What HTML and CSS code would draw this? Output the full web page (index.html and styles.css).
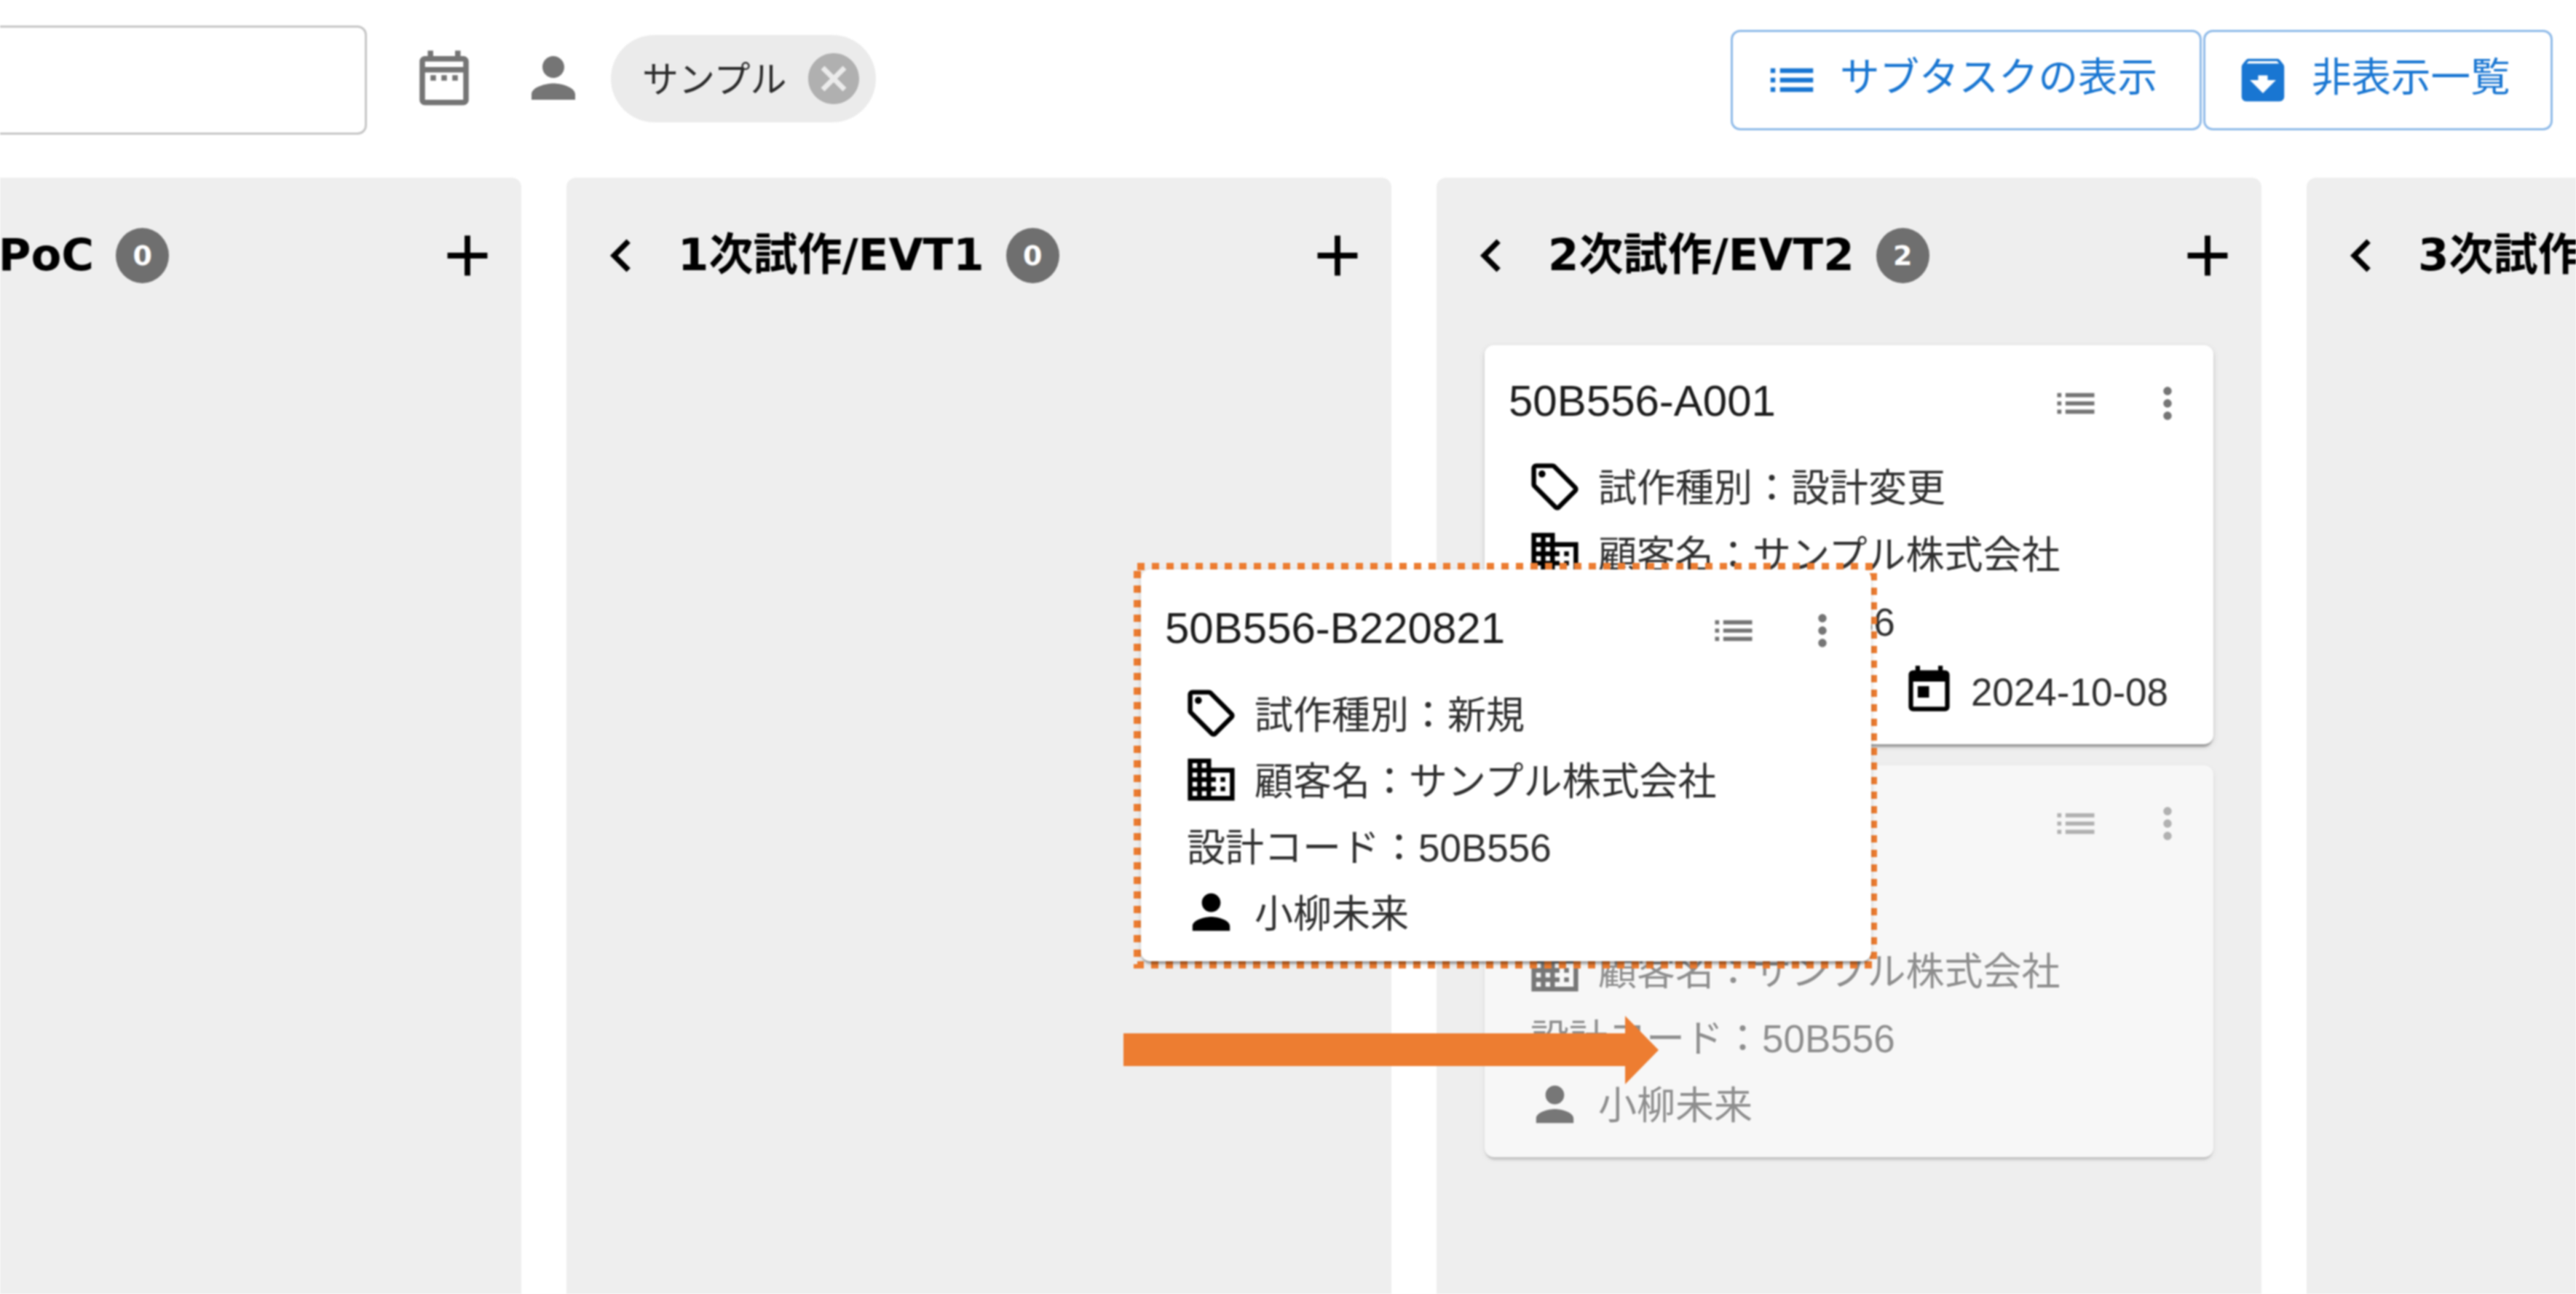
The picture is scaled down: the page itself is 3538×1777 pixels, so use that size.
FILE: index.html
```html
<!DOCTYPE html>
<html lang="ja">
<head>
<meta charset="utf-8">
<title>Board</title>
<link rel="stylesheet" href="styles.css">
</head>
<body>
<svg class="sprite" aria-hidden="true">
  <symbol id="i-range" viewBox="0 0 24 24"><path d="M7 11h2v2H7v-2zm14-5v14c0 1.1-.9 2-2 2H5c-1.11 0-2-.9-2-2l.01-14c0-1.1.88-2 1.99-2h1V2h2v2h8V2h2v2h1c1.1 0 2 .9 2 2zM5 8h14V6H5v2zm14 12V10H5v10h14zm-4-7h2v-2h-2v2zm-4 0h2v-2h-2v2z"/></symbol>
  <symbol id="i-person" viewBox="0 0 24 24"><path d="M12 12c2.21 0 4-1.79 4-4s-1.79-4-4-4-4 1.79-4 4 1.79 4 4 4zm0 2c-2.67 0-8 1.34-8 4v2h16v-2c0-2.66-5.33-4-8-4z"/></symbol>
  <symbol id="i-list" viewBox="0 0 24 24"><path d="M3 13h2v-2H3v2zm0 4h2v-2H3v2zm0-8h2V7H3v2zm4 4h14v-2H7v2zm0 4h14v-2H7v2zM7 7v2h14V7H7z"/></symbol>
  <symbol id="i-archive" viewBox="0 0 24 24"><path d="m20.54 5.23-1.39-1.68C18.88 3.21 18.47 3 18 3H6c-.47 0-.88.21-1.16.55L3.46 5.23C3.17 5.57 3 6.02 3 6.5V19c0 1.1.9 2 2 2h14c1.1 0 2-.9 2-2V6.5c0-.48-.17-.93-.46-1.27zM12 17.5 6.5 12H10v-2h4v2h3.5L12 17.5zM5.12 5l.81-1h12l.94 1H5.12z"/></symbol>
  <symbol id="i-cancel" viewBox="0 0 24 24"><path d="M12 2C6.47 2 2 6.47 2 12s4.47 10 10 10 10-4.47 10-10S17.53 2 12 2zm5 13.59L15.59 17 12 13.41 8.41 17 7 15.59 10.59 12 7 8.41 8.41 7 12 10.59 15.59 7 17 8.41 13.41 12 17 15.59z"/></symbol>
  <symbol id="i-before" viewBox="0 0 24 24"><path d="M15.41 7.41 14 6l-6 6 6 6 1.41-1.41L10.83 12z"/></symbol>
  <symbol id="i-add" viewBox="0 0 24 24"><path d="M19 13h-6v6h-2v-6H5v-2h6V5h2v6h6v2z"/></symbol>
  <symbol id="i-more" viewBox="0 0 24 24"><path d="M12 8c1.1 0 2-.9 2-2s-.9-2-2-2-2 .9-2 2 .9 2 2 2zm0 2c-1.1 0-2 .9-2 2s.9 2 2 2 2-.9 2-2-.9-2-2-2zm0 6c-1.1 0-2 .9-2 2s.9 2 2 2 2-.9 2-2-.9-2-2-2z"/></symbol>
  <symbol id="i-tag" viewBox="0 0 24 24"><path d="m21.41 11.58-9-9C12.05 2.22 11.55 2 11 2H4c-1.1 0-2 .9-2 2v7c0 .55.22 1.05.59 1.42l9 9c.36.36.86.58 1.41.58s1.05-.22 1.41-.59l7-7c.37-.36.59-.86.59-1.41s-.23-1.06-.59-1.42zM13 20.01 4 11V4h7v-.01l9 9-7 7.02z"/><circle cx="6.5" cy="6.5" r="1.5"/></symbol>
  <symbol id="i-business" viewBox="0 0 24 24"><path d="M12 7V3H2v18h20V7H12zM6 19H4v-2h2v2zm0-4H4v-2h2v2zm0-4H4V9h2v2zm0-4H4V5h2v2zm4 12H8v-2h2v2zm0-4H8v-2h2v2zm0-4H8V9h2v2zm0-4H8V5h2v2zm10 12h-8v-2h2v-2h-2v-2h2v-2h-2V9h8v10zm-2-8h-2v2h2v-2zm0 4h-2v2h2v-2z"/></symbol>
  <symbol id="i-today" viewBox="0 0 24 24"><path d="M19 3h-1V1h-2v2H8V1H6v2H5c-1.11 0-1.99.9-1.99 2L3 19c0 1.1.89 2 2 2h14c1.1 0 2-.9 2-2V5c0-1.1-.9-2-2-2zm0 16H5V8h14v11zM7 10h5v5H7z"/></symbol>
</svg>

<div class="page">
  <header class="toolbar">
    <div class="search"></div>
    <svg class="tool-icon tool-calendar"><use href="#i-range"/></svg>
    <svg class="tool-icon tool-person"><use href="#i-person"/></svg>
    <div class="chip">
      <span class="chip-label">サンプル</span>
      <svg class="chip-delete"><use href="#i-cancel"/></svg>
    </div>
    <div class="actions">
      <button class="action action-subtask" type="button"><svg class="action-icon"><use href="#i-list"/></svg><span>サブタスクの表示</span></button>
      <button class="action action-hidden" type="button"><svg class="action-icon"><use href="#i-archive"/></svg><span>非表示一覧</span></button>
    </div>
  </header>

  <main class="board">
    <section class="column">
      <div class="column-head">
        <svg class="chevron"><use href="#i-before"/></svg>
        <h2 class="column-title column-title-first">0次試作/PoC</h2>
        <span class="count">0</span>
        <svg class="add"><use href="#i-add"/></svg>
      </div>
    </section>

    <section class="column">
      <div class="column-head">
        <svg class="chevron"><use href="#i-before"/></svg>
        <h2 class="column-title">1次試作/EVT1</h2>
        <span class="count">0</span>
        <svg class="add"><use href="#i-add"/></svg>
      </div>
    </section>

    <section class="column">
      <div class="column-head">
        <svg class="chevron"><use href="#i-before"/></svg>
        <h2 class="column-title">2次試作/EVT2</h2>
        <span class="count">2</span>
        <svg class="add"><use href="#i-add"/></svg>
      </div>
      <div class="cards">
        <article class="card">
          <div class="card-head">
            <h3 class="card-title">50B556-A001</h3>
            <svg class="card-tool card-list"><use href="#i-list"/></svg>
            <svg class="card-tool card-more"><use href="#i-more"/></svg>
          </div>
          <div class="row"><svg class="row-icon"><use href="#i-tag"/></svg><span>試作種別：設計変更</span></div>
          <div class="row"><svg class="row-icon"><use href="#i-business"/></svg><span>顧客名：サンプル株式会社</span></div>
          <div class="row row-plain"><span>設計コード：50B556</span></div>
          <div class="row row-last">
            <svg class="row-icon row-icon-person"><use href="#i-person"/></svg><span>小柳未来</span>
            <div class="due"><svg class="due-icon"><use href="#i-today"/></svg><span>2024-10-08</span></div>
          </div>
        </article>
        <article class="card card-ghost">
          <div class="card-head">
            <h3 class="card-title">50B556-B220821</h3>
            <svg class="card-tool card-list"><use href="#i-list"/></svg>
            <svg class="card-tool card-more"><use href="#i-more"/></svg>
          </div>
          <div class="row"><svg class="row-icon"><use href="#i-tag"/></svg><span>試作種別：新規</span></div>
          <div class="row"><svg class="row-icon"><use href="#i-business"/></svg><span>顧客名：サンプル株式会社</span></div>
          <div class="row row-plain"><span>設計コード：50B556</span></div>
          <div class="row"><svg class="row-icon row-icon-person"><use href="#i-person"/></svg><span>小柳未来</span></div>
        </article>
      </div>
    </section>

    <section class="column">
      <div class="column-head">
        <svg class="chevron"><use href="#i-before"/></svg>
        <h2 class="column-title">3次試作/EVT3</h2>
        <span class="count">0</span>
        <svg class="add"><use href="#i-add"/></svg>
      </div>
    </section>
  </main>

  <div class="drag">
    <svg class="drag-outline" viewBox="0 0 1021 557"><rect x="5" y="5" width="1011" height="547"/></svg>
    <article class="card card-drag">
      <div class="card-head">
        <h3 class="card-title">50B556-B220821</h3>
        <svg class="card-tool card-list"><use href="#i-list"/></svg>
        <svg class="card-tool card-more"><use href="#i-more"/></svg>
      </div>
      <div class="row"><svg class="row-icon"><use href="#i-tag"/></svg><span>試作種別：新規</span></div>
      <div class="row"><svg class="row-icon"><use href="#i-business"/></svg><span>顧客名：サンプル株式会社</span></div>
      <div class="row row-plain"><span>設計コード：50B556</span></div>
      <div class="row"><svg class="row-icon row-icon-person"><use href="#i-person"/></svg><span>小柳未来</span></div>
    </article>
  </div>

  <svg class="arrow" viewBox="0 0 735 94"><polygon points="0,24 689,24 689,0 735,47 689,94 689,69 0,69"/></svg>
</div>
</body>
</html>
```

FILE: styles.css
```css
* { box-sizing: border-box; }

html, body {
  margin: 0;
  height: 100%;
  overflow: hidden;
  background: #fff;
}

body {
  font-family: "Liberation Sans", "Noto Sans CJK JP", sans-serif;
  font-size: 53px;
  color: #2f2f2f;
}

.sprite { display: none; }

.page {
  position: relative;
  width: 3538px;
  height: 1777px;
  overflow: hidden;
  filter: blur(.9px);
}

/* toolbar */
.toolbar {
  display: flex;
  align-items: center;
  height: 219px;
  padding-right: 32px;
}

.search {
  width: 524px;
  height: 150px;
  margin-left: -20px;
  border: 3px solid #c6c6c6;
  border-radius: 13px;
}

.tool-icon {
  flex: none;
  width: 90px;
  height: 90px;
  fill: #757575;
  margin-top: -5px;
}

.tool-calendar { margin-left: 61px; }
.tool-person { margin-left: 60px; }

.chip {
  display: flex;
  align-items: center;
  width: 364px;
  height: 120px;
  margin-left: 34px;
  margin-top: -3px;
  padding-left: 43px;
  border-radius: 60px;
  background: #ebebeb;
}

.chip-label {
  position: relative;
  top: -3px;
  font-size: 50px;
  color: #2b2b2b;
  white-space: nowrap;
}

.chip-delete {
  flex: none;
  width: 84px;
  height: 84px;
  margin-left: 22px;
  fill: #b0b0b0;
}

.actions {
  display: flex;
  gap: 2px;
  margin-left: auto;
}

.action {
  display: flex;
  align-items: center;
  height: 138px;
  padding: 0;
  border: 3px solid #90bbe9;
  border-radius: 13px;
  background: #fff;
  color: #1976d2;
  font: inherit;
  font-size: 54.5px;
  white-space: nowrap;
}

.action span { position: relative; top: -8px; }

.action-subtask { width: 647px; padding-left: 42px; }
.action-hidden { width: 480px; padding-left: 40px; }

.action-icon {
  flex: none;
  width: 78px;
  height: 78px;
  fill: #1976d2;
}

.action-subtask .action-icon { margin-right: 27px; }
.action-hidden .action-icon { margin-right: 28px; }

/* board */
.board {
  display: flex;
  gap: 62px;
  height: 1533px;
  margin-top: 25px;
  margin-left: -417px;
}

.column {
  flex: none;
  width: 1133px;
  height: 100%;
  padding: 0 66px;
  border-radius: 13px 13px 0 0;
  background: #eee;
}

.column-head {
  display: flex;
  align-items: center;
  height: 214px;
  margin: 0 -66px;
  padding: 0 27px 0 30px;
}

.chevron {
  flex: none;
  width: 90px;
  height: 90px;
  fill: #000;
}

.column-title {
  position: relative;
  top: -7px;
  margin: 0 0 0 33px;
  font-family: "DejaVu Sans", "Noto Sans CJK JP", sans-serif;
  font-size: 61px;
  font-weight: 700;
  color: #000;
  white-space: nowrap;
}

.column-title-first { margin-left: 47px; }

.count {
  flex: none;
  display: flex;
  align-items: center;
  justify-content: center;
  width: 73px;
  height: 76px;
  margin-left: 30px;
  border-radius: 50%;
  background: #6f6f6f;
  color: #fff;
  font-family: "DejaVu Sans", sans-serif;
  font-size: 38px;
  font-weight: 700;
}

.add {
  flex: none;
  width: 94px;
  height: 94px;
  margin-left: auto;
  fill: #000;
}

.cards {
  display: flex;
  flex-direction: column;
  gap: 29px;
  margin-top: 16px;
}

/* cards */
.card {
  width: 1001px;
  padding-top: 26px;
  padding-bottom: 22px;
  border-radius: 13px;
  background: #fff;
  box-shadow: 0 7px 3px -3px rgba(0, 0, 0, .2), 0 3px 3px rgba(0, 0, 0, .14), 0 3px 10px rgba(0, 0, 0, .12);
}

.card-ghost { height: 538px; opacity: .5; }
.card-ghost .card-head { margin-bottom: 17px; }

.card-head {
  display: flex;
  align-items: center;
  height: 100px;
  margin-bottom: 22px;
  padding-left: 33px;
}

.card-title {
  margin: 0;
  font-size: 60px;
  font-weight: 400;
  color: #1c1c1c;
  white-space: nowrap;
}

.card-tool {
  flex: none;
  width: 68px;
  height: 68px;
  margin-top: 8px;
  fill: #757575;
}

.card-list { margin-left: auto; }
.card-more { margin-left: 58px; margin-right: 29px; }

.row {
  display: flex;
  align-items: center;
  height: 92px;
  padding-left: 58px;
  white-space: nowrap;
}

.row span { position: relative; top: -2px; }

.row-plain { padding-left: 63px; }
.row-last { height: 102px; padding-bottom: 2px; }

.row-icon {
  flex: none;
  width: 77px;
  height: 77px;
  margin-right: 21px;
  fill: #000;
}

.due {
  display: flex;
  align-items: center;
  margin-left: auto;
  margin-right: 62px;
}

.row .due span { top: 2px; }

.due-icon {
  flex: none;
  width: 75px;
  height: 75px;
  margin-right: 20px;
  fill: #000;
}

/* dragged card and annotation */
.drag {
  position: absolute;
  left: 1557px;
  top: 773px;
  width: 1021px;
  height: 557px;
  padding: 9px 8px 10px 10px;
}

.drag-outline {
  position: absolute;
  inset: 0;
  width: 100%;
  height: 100%;
  overflow: visible;
}

.drag-outline rect {
  fill: none;
  stroke: #ed7d31;
  stroke-width: 10;
  stroke-dasharray: 10 10;
}

.card-drag {
  position: relative;
  width: 1003px;
  height: 538px;
  padding-top: 30px;
}

.card-drag .row { height: 91px; }
.card-drag .card-more { margin-left: 54px; margin-right: 33px; }

.arrow {
  position: absolute;
  left: 1543px;
  top: 1395px;
  width: 735px;
  height: 94px;
  fill: #ed7d31;
}
```
